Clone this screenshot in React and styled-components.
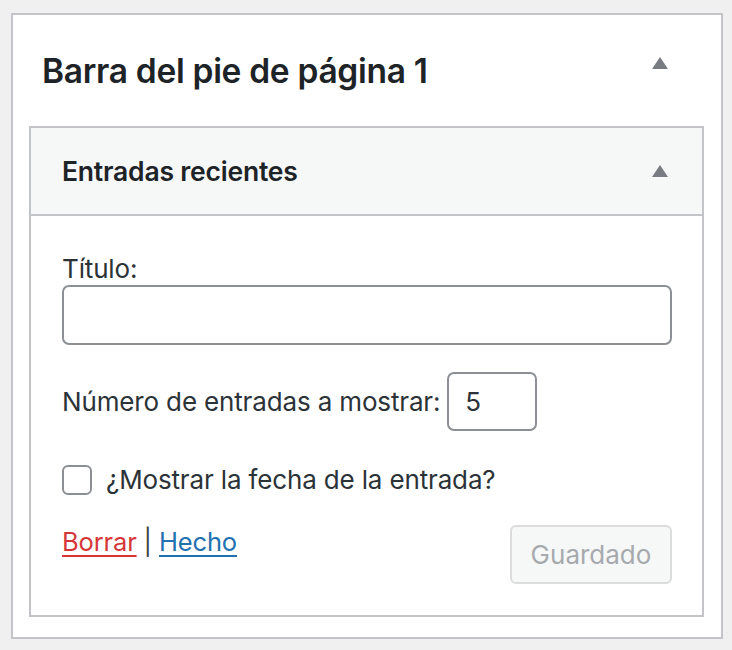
import styled, { createGlobalStyle } from 'styled-components';

const Global = createGlobalStyle`
  html, body {
    margin: 0;
    background: #f0f0f1;
  }
  body {
    font-family: Inter, "Noto Sans", sans-serif;
    color: #2c3338;
    padding: 13px 9px 11px 11px;
  }
`;

const Panel = styled.section`
  border: 2px solid #c3c4c7;
  background: #fff;
  padding: 0 17px 20px 16px;
`;

const PanelHeader = styled.div`
  height: 111px;
  display: flex;
  align-items: center;
  justify-content: space-between;
  padding: 0 36px 0 13px;
`;

const PanelTitle = styled.h2`
  margin: 0;
  font-size: 33.5px;
  font-weight: 600;
  color: #1d2327;
  letter-spacing: -0.3px;
`;

const Toggle = styled.span`
  width: 0;
  height: 0;
  border-left: 8px solid transparent;
  border-right: 8px solid transparent;
  border-bottom: 12px solid #787c82;
  margin-bottom: ${p => p.$lift || 0}px;
`;

const Widget = styled.div`
  border: 2px solid #c3c4c7;
`;

const WidgetHeader = styled.div`
  height: 86px;
  display: flex;
  align-items: center;
  justify-content: space-between;
  padding: 0 34px 0 31px;
  background: #f6f7f7;
  border-bottom: 2px solid #c3c4c7;
`;

const WidgetTitle = styled.h3`
  margin: 0;
  font-size: 26.5px;
  font-weight: 600;
  color: #1d2327;
  letter-spacing: -0.2px;
`;

const WidgetBody = styled.div`
  padding: 38px 30px 31px 31px;
  font-size: 26px;
  letter-spacing: -0.15px;
`;

const Label = styled.label`
  display: block;
  line-height: 30px;
  margin-bottom: 1px;
`;

const TextInput = styled.input`
  display: block;
  box-sizing: border-box;
  width: 100%;
  height: 60px;
  border: 2px solid #8c8f94;
  border-radius: 7px;
  background: #fff;
  font: inherit;
  padding: 0 16px;
  margin-bottom: 27px;
`;

const Row = styled.div`
  display: flex;
  align-items: center;
  gap: ${p => p.$space || 9}px;
  line-height: 30px;
  margin-bottom: ${p => p.$gap || 0}px;
`;

const NumberInput = styled.input`
  box-sizing: border-box;
  width: 90px;
  height: 59px;
  border: 2px solid #8c8f94;
  border-radius: 7px;
  font: inherit;
  font-size: 26px;
  color: #2c3338;
  padding: 0 16px;
`;

const Check = styled.span`
  box-sizing: border-box;
  width: 30px;
  height: 30px;
  border: 2px solid #8c8f94;
  border-radius: 6px;
  margin-right: 5px;
`;

const Actions = styled.div`
  display: flex;
  justify-content: space-between;
  align-items: flex-start;
`;

const Links = styled.div`
  padding-top: 2px;
  line-height: 30px;
  font-size: 25.5px;
  color: #3c434a;
`;

const Link = styled.a`
  color: ${p => (p.$danger ? '#d63638' : '#2271b1')};
  text-decoration: underline;
  text-decoration-thickness: 2px;
  text-underline-offset: 4px;
  cursor: pointer;
`;

const SaveButton = styled.button`
  box-sizing: border-box;
  width: 162px;
  height: 59px;
  border: 2px solid #dcdcde;
  border-radius: 6px;
  background: #f6f7f7;
  color: #a7aaad;
  font: inherit;
  font-size: 26px;
`;

export default function App() {
  return (
    <>
      <Global />
      <Panel>
        <PanelHeader>
          <PanelTitle>Barra del pie de página 1</PanelTitle>
          <Toggle $lift={16} />
        </PanelHeader>
        <Widget>
          <WidgetHeader>
            <WidgetTitle>Entradas recientes</WidgetTitle>
            <Toggle />
          </WidgetHeader>
          <WidgetBody>
            <Label>Título:</Label>
            <TextInput type="text" />
            <Row $gap={34} $space={7}>
              <span>Número de entradas a mostrar:</span>
              <NumberInput type="text" defaultValue="5" />
            </Row>
            <Row $gap={30}>
              <Check />
              <span>¿Mostrar la fecha de la entrada?</span>
            </Row>
            <Actions>
              <Links>
                <Link $danger>Borrar</Link> | <Link>Hecho</Link>
              </Links>
              <SaveButton disabled>Guardado</SaveButton>
            </Actions>
          </WidgetBody>
        </Widget>
      </Panel>
    </>
  );
}
